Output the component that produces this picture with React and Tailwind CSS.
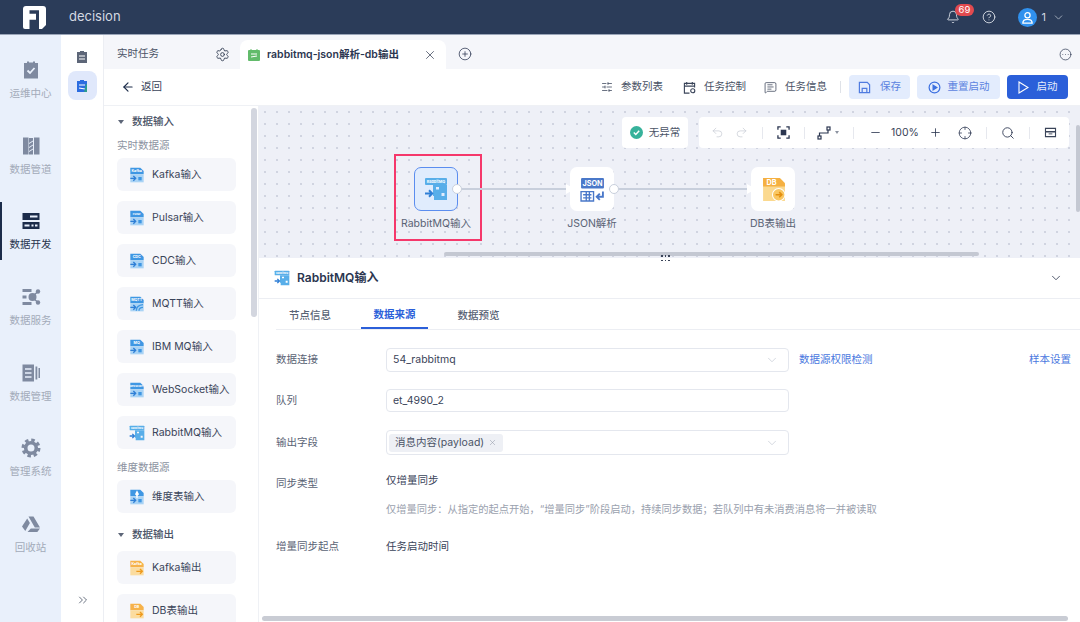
import {
  ArrowLeft,
  ChevronDown,
  ChevronsRight,
  CircleEllipsis,
  CirclePlus,
  Crosshair,
  HelpCircle,
  Minus,
  Plus,
  Redo2,
  Search,
  Settings,
  SlidersHorizontal,
  Undo2,
  X,
  Bell,
  MessageSquareText,
} from "lucide-react";

const FONT = { fontFamily: "Inter, 'Noto Sans CJK SC', sans-serif" };

// rail icons
const RailIcon = ({ kind, color }) => {
  const common = { width: 20, height: 20, viewBox: "0 0 20 20", fill: color };
  if (kind === "ops")
    return (
      <svg {...common}>
        <path d="M3 3h3V1.500h2v1h4v-1h2V3h3v15.500H3z" />
        <path d="M6.500 10.500l2.500 2.500 4.500-5" fill="none" stroke="#e9f0fb" strokeWidth="1.800" />
      </svg>
    );
  if (kind === "pipe")
    return (
      <svg {...common}>
        <path d="M2 1.500h5.500v17H2zM13 1.500h5.500v17H13z" />
        <path d="M8 2h4v2.500L8 7zM8 8l4-2.500v3L8 11zM8 12l4-2.500v3L8 15zM8 16l4-2.500v5H8z" />
      </svg>
    );
  if (kind === "dev")
    return (
      <svg {...common}>
        <path d="M1.500 2h17v7h-17zM1.500 11h17v7h-17z" />
        <path d="M9 4.500h7.500v2H9zM3.500 13.500h5v2h-5zM14 13.500h2.500v2H14zM10.500 13.500h2v2h-2z" fill="#e9f0fb" />
      </svg>
    );
  if (kind === "svc")
    return (
      <svg {...common}>
        <path d="M1.500 2h9v3h-9zM1.500 15h9v3h-9zM1.500 8.500h4v3h-4z" />
        <circle cx="11.500" cy="10" r="4" />
        <circle cx="17" cy="4.500" r="2.200" />
        <circle cx="17" cy="15.500" r="2.200" />
        <path d="M12 9l5-4.500M12 11l5 4.500" stroke={color} strokeWidth="1.500" />
      </svg>
    );
  if (kind === "mgr")
    return (
      <svg {...common}>
        <path d="M1.500 1.500h11.500v17H1.500z" />
        <path d="M4 6h6.500M4 10h6.500M4 14h6.500" stroke="#e9f0fb" strokeWidth="1.500" />
        <path d="M14.500 3.500h1.800v13h-1.800zM17.500 5h1.500v10h-1.500z" />
      </svg>
    );
  if (kind === "sys")
    return (
      <svg width="20" height="20" viewBox="0 0 20 20" fill="none" stroke={color}>
        <circle cx="10" cy="10" r="5.300" strokeWidth="3.600" />
        <circle cx="10" cy="10" r="8" strokeWidth="3" strokeDasharray="3.500 2.780" />
      </svg>
    );
  return (
    <svg {...common}>
      <path d="M7.500 2.500h5l6.500 11h-5.200zM6.200 4.500l2.700 4.600-4.600 8L1 12.500zM9.800 14.500H19l-2.700 3.500H6.500z" />
    </svg>
  );
};

const RailItem = ({ kind, label, active }) => (
  <div className="relative flex h-[75.6px] flex-col items-center justify-center gap-[7px]">
    {active && <div className="absolute top-[8px] left-0 h-[58px] w-[2px] bg-[#1c2c4a]" />}
    <RailIcon kind={kind} color={active ? "#1c2c4a" : "#7f8aa0"} />
    <span className={`text-[10.5px] leading-[14px] ${active ? "text-[#27344c]" : "text-[#a3abb9]"}`}>{label}</span>
  </div>
);

// node icon, tag on top, body under it and an arrow
const NodeGlyph = ({ tag, size = 16, orange, shape }) => {
  const main = orange ? "#f6b24a" : "#3f97e3";
  const light = orange ? "#fbdc9f" : "#a9d3f5";
  const arrow = orange ? "#ee9a1d" : "#2f7fd6";
  const tagSize = tag.length > 5 ? 3.800 : 5.500;
  if (shape === "rabbit") {
    return (
      <svg width={size} height={size} viewBox="0 0 24 24" className="shrink-0">
        <rect x="1" y="1" width="22" height="7" rx="1" fill="#58aee9" />
        <text x="12" y="6" textAnchor="middle" fontSize="3.800" fontWeight="700" fill="#fff" style={FONT}>
          {tag}
        </text>
        <path
          fillRule="evenodd"
          d="M9 8h14v15H10v-4H9zM12 10v2.500h3V10zM17.500 16v3h3v-3z"
          fill="#58aee9"
        />
        <path d="M1 16.500h7m-3-3.200l3.200 3.200-3.200 3.200" fill="none" stroke={arrow} strokeWidth="2" />
      </svg>
    );
  }
  return (
    <svg width={size} height={size} viewBox="0 0 24 24" className="shrink-0">
      <path d="M2 1h15l5 5v5H2z" fill={main} />
      <path d="M2 11h20v12H2z" fill={light} />
      {shape === "mqtt" && (
        <path d="M11 22q0-8 10-9M15 22q0-5 6-5" fill="none" stroke={main} strokeWidth="2" />
      )}
      {shape === "dim" && <path d="M12 2l3 6-2 2v4h-2v-4L9 8z" fill="#fff" />}
      {!orange && shape !== "mqtt" && <rect x="14" y="15" width="5" height="5" fill={main} />}
      <text x="11.500" y="8" textAnchor="middle" fontSize={tagSize} fontWeight="700" fill="#fff" style={FONT}>
        {tag}
      </text>
      {orange ? (
        <path d="M11 17h9m-3.500-3.500L20 17l-3.500 3.500" fill="none" stroke={arrow} strokeWidth="2" />
      ) : (
        <path d="M2 17h8m-3.500-3.500L10 17l-3.500 3.500" fill="none" stroke={arrow} strokeWidth="2" />
      )}
    </svg>
  );
};

const PaletteItem = ({ tag, label, orange, shape, className = "" }) => (
  <div className={`flex h-[33px] w-[119px] items-center rounded-[6px] bg-[#f5f6fa] pl-[12px] ${className}`}>
    <NodeGlyph tag={tag} orange={orange} shape={shape} />
    <span className="ml-[7px] text-[10.5px] whitespace-nowrap text-[#3a4459]">{label}</span>
  </div>
);

const GroupTitle = ({ label, className = "" }) => (
  <div className={`flex items-center ${className}`}>
    <span className="ml-[14px] h-0 w-0 border-x-[3px] border-t-[4px] border-x-transparent border-t-[#5d6678]" />
    <span className="ml-[8px] text-[10.5px] font-medium text-[#4a5366]">{label}</span>
  </div>
);

const ToolAction = ({ icon, label }) => (
  <div className="flex items-center gap-[8px] text-[10.5px] text-[#4a5366]">
    {icon}
    <span>{label}</span>
  </div>
);

const Sep = () => <div className="h-[12px] w-px bg-[#e6e8ee]" />;

const CanvasNode = ({ x, selected, children }) => (
  <div
    className={`absolute top-[61px] flex h-[44px] w-[44px] items-center justify-center rounded-[7px] ${
      selected ? "border border-[#5b8def] bg-[#e0ecfd]" : "bg-white"
    }`}
    style={{ left: x }}
  >
    {children}
  </div>
);

const Port = ({ x }) => (
  <div className="absolute top-[78px] h-[10px] w-[10px] rounded-full border border-[#c8cfdc] bg-white" style={{ left: x }} />
);

const Edge = ({ x, w }) => (
  <div className="absolute top-[82px] h-[2px] bg-[#c8cfdc]" style={{ left: x, width: w }}>
    <span className="absolute top-[-4px] right-[-9px] h-0 w-0 border-y-[5px] border-l-[9px] border-y-transparent border-l-white" />
  </div>
);

const NodeLabel = ({ x, children }) => (
  <div className="absolute top-[110px] w-[100px] text-center text-[10.5px] text-[#5a6375]" style={{ left: x }}>
    {children}
  </div>
);

const FormRow = ({ label, children, className = "" }) => (
  <div className={`flex items-center ${className}`}>
    <span className="w-[110px] shrink-0 text-[10.5px] text-[#5a6375]">{label}</span>
    {children}
  </div>
);

const FieldBox = ({ children, arrow, h = "h-[24px]" }) => (
  <div className={`flex w-[403px] items-center justify-between rounded-[4px] border border-[#e4e7ee] bg-white pr-[9px] text-[10.5px] text-[#3a4459] ${h}`}>
    {children}
    {arrow && <ChevronDown size={14} color="#c3c8d2" strokeWidth={1.200} />}
  </div>
);

const App = () => {
  return (
    <div className="flex h-[622px] w-[1080px] flex-col overflow-hidden bg-white" style={FONT}>
      {/* top bar */}
      <header className="flex h-[35px] shrink-0 items-center border-b border-[#9aa5b8] bg-[#2b3c59]">
        <svg width="23" height="23" viewBox="0 0 23 23" className="ml-[23px]">
          <path d="M3 0h17q3 0 3 3v16l-4 4H2q-2 0-2-2V3q0-3 3-3z" fill="#fff" />
          <path d="M6.500 4.300H16V23H6.500v-9.300H13V7.700H6.500z" fill="#2b3c59" />
        </svg>
        <span className="ml-[23px] text-[13px] text-[#d4d9e2]">decision</span>
        <div className="relative ml-auto flex items-center">
          <Bell size={14} color="#dfe3ea" strokeWidth={1.500} />
          <span className="absolute top-[-4px] left-[9px] rounded-full bg-[#e24a4f] px-[4px] text-[9.500px] leading-[12px] text-white">69</span>
          <HelpCircle size={14} color="#dfe3ea" strokeWidth={1.500} className="ml-[22px]" />
          <div className="ml-[22px] flex h-[19px] w-[19px] items-center justify-center rounded-full bg-[#3091ee]">
            <svg width="13" height="13" viewBox="0 0 14 14" fill="none" stroke="#fff" strokeWidth="1.400">
              <circle cx="7" cy="4.500" r="2.800" />
              <path d="M2 13q0-4 5-4t5 4z" />
            </svg>
          </div>
          <span className="ml-[5px] text-[11px] text-[#d4d9e2]">1</span>
          <ChevronDown size={13} color="#c0c7d3" strokeWidth={1.400} className="mr-[15px] ml-[6px]" />
        </div>
      </header>

      <div className="flex min-h-0 flex-1">
        {/* main rail */}
        <nav className="w-[61px] shrink-0 bg-[#e9f0fb] pt-[8px]">
          <RailItem kind="ops" label="运维中心" />
          <RailItem kind="pipe" label="数据管道" />
          <RailItem kind="dev" label="数据开发" active />
          <RailItem kind="svc" label="数据服务" />
          <RailItem kind="mgr" label="数据管理" />
          <RailItem kind="sys" label="管理系统" />
          <RailItem kind="bin" label="回收站" />
        </nav>

        {/* sub rail */}
        <div className="flex w-[43px] shrink-0 flex-col items-center border-r border-[#eceef3] bg-white pt-[15px]">
          <svg width="14" height="14" viewBox="0 0 14 14">
            <path d="M2 2h3V1h4v1h3v11H2z" fill="#5d6678" />
            <path d="M4 6h6M4 9h6" stroke="#fff" strokeWidth="1.200" />
          </svg>
          <div className="mt-[7px] flex h-[29px] w-[29px] items-center justify-center rounded-[8px] bg-[#e0e8fb]">
            <svg width="14" height="14" viewBox="0 0 14 14">
              <path d="M2 2h3V1h4v1h3v11H2z" fill="#2b6ce0" />
              <path d="M4 6h6M4 9l6 1" stroke="#fff" strokeWidth="1.200" />
              <path d="M11 5h1v8h-3z" fill="#2a9d8f" />
            </svg>
          </div>
          <ChevronsRight size={14} color="#4a5366" strokeWidth={1.400} className="mt-auto mb-[15px] ml-[1px]" />
        </div>

        <main className="flex min-w-0 flex-1 flex-col">
          {/* tabs */}
          <div className="flex h-[34px] shrink-0 items-end bg-[#f5f6fa]">
            <div className="flex h-[34px] w-[136px] items-center pt-[4px] pl-[13px]">
              <span className="text-[10.5px] text-[#4a5366]">实时任务</span>
              <Settings size={15} color="#3a4459" strokeWidth={1.500} className="mr-[10px] ml-auto" />
            </div>
            <div className="flex h-[29px] w-[206px] items-center rounded-t-[8px] bg-white pl-[8px]">
              <svg width="12" height="12" viewBox="0 0 12 12">
                <rect y="1" width="12" height="11" rx="1" fill="#62bb6b" />
                <path d="M2.500 0h1v2h-1zM8.500 0h1v2h-1z" fill="#62bb6b" />
                <path d="M3 5h6M3 8l6-1" stroke="#fff" strokeWidth="1" />
              </svg>
              <span className="ml-[7px] text-[10.5px] font-semibold whitespace-nowrap text-[#2b3650]">rabbitmq-json解析-db输出</span>
              <X size={14} color="#3a4459" strokeWidth={1.300} className="mr-[9px] ml-auto" />
            </div>
            <CirclePlus size={14} color="#2b3650" strokeWidth={1.300} className="mb-[8px] ml-[12px]" />
            <CircleEllipsis size={13} color="#2b3650" strokeWidth={1.300} className="mr-[8px] mb-[8px] ml-auto" />
          </div>

          {/* toolbar */}
          <div className="flex h-[37px] shrink-0 items-center border-b border-[#eff1f5] bg-white">
            <ArrowLeft size={14} color="#1c2c4a" strokeWidth={2} className="ml-[17px]" />
            <span className="ml-[6px] text-[10.5px] text-[#3a4459]">返回</span>
            <div className="ml-auto flex items-center">
              <ToolAction icon={<SlidersHorizontal size={12} color="#3a4459" strokeWidth={1.500} />} label="参数列表" />
              <div className="w-[20px]" />
              <ToolAction
                icon={
                  <svg width="13" height="13" viewBox="0 0 14 14" fill="none" stroke="#3a4459" strokeWidth="1.200">
                    <path d="M7 13H1.500V2.500h11V7M1.500 5.500h11M4 1v3M10 1v3" />
                    <circle cx="10.500" cy="10.500" r="2.200" />
                  </svg>
                }
                label="任务控制"
              />
              <div className="w-[18px]" />
              <ToolAction icon={<MessageSquareText size={13} color="#3a4459" strokeWidth={1.400} />} label="任务信息" />
              <div className="mr-[8px] ml-[13px] h-[12px] w-px bg-[#dfe2e8]" />
              <button className="flex h-[24px] w-[61px] items-center justify-center gap-[9px] rounded-[4px] bg-[#e3ecfd] text-[10.5px] text-[#5b83e0]">
                <svg width="13" height="13" viewBox="0 0 14 14" fill="none" stroke="#4f7be0" strokeWidth="1.300">
                  <path d="M1.500 1.500h8.500l2.500 2.500v8.500h-11zM4.500 12.500V8h5v4.500" />
                </svg>
                保存
              </button>
              <button className="ml-[7px] flex h-[24px] w-[83px] items-center justify-center gap-[7px] rounded-[4px] bg-[#e3ecfd] text-[10.5px] text-[#5b83e0]">
                <svg width="13" height="13" viewBox="0 0 14 14" fill="none" stroke="#3b6fe0" strokeWidth="1.300">
                  <circle cx="7" cy="7" r="5.800" />
                  <path d="M5.500 4.500l4 2.500-4 2.500z" fill="#3b6fe0" />
                </svg>
                重置启动
              </button>
              <button className="mr-[12px] ml-[7px] flex h-[24px] w-[61px] items-center justify-center gap-[8px] rounded-[4px] bg-[#2b5fd9] text-[10.5px] text-[#e6edfb]">
                <svg width="11" height="13" viewBox="0 0 11 13" fill="none" stroke="#fff" strokeWidth="1.100">
                  <path d="M1 1l9 5.500-9 5.500z" />
                </svg>
                启动
              </button>
            </div>
          </div>

          <div className="flex min-h-0 flex-1">
            {/* palette */}
            <aside className="relative w-[155px] shrink-0 overflow-hidden border-r border-[#eff1f5] bg-white pl-[13px]">
              <div className="absolute top-[2px] right-[1px] h-[209px] w-[6px] rounded-full bg-[#d3d6df]" />
              <GroupTitle label="数据输入" className="-ml-[13px] h-[33px] pb-[1px]" />
              <div className="mb-[5px] text-[10.5px] leading-[14px] text-[#8c93a1]">实时数据源</div>
              <div className="flex flex-col gap-[10px]">
                <PaletteItem tag="Kafka" label="Kafka输入" />
                <PaletteItem tag="Pulsar" label="Pulsar输入" />
                <PaletteItem tag="CDC" label="CDC输入" />
                <PaletteItem tag="MQTT" label="MQTT输入" shape="mqtt" />
                <PaletteItem tag="MQ" label="IBM MQ输入" />
                <PaletteItem tag="WebSocket" label="WebSocket输入" />
                <PaletteItem tag="RabbitMQ" label="RabbitMQ输入" shape="rabbit" />
              </div>
              <div className="mt-[12px] mb-[5px] text-[10.5px] leading-[14px] text-[#8c93a1]">维度数据源</div>
              <PaletteItem tag="" label="维度表输入" shape="dim" />
              <GroupTitle label="数据输出" className="-ml-[13px] h-[38px] pt-[5px]" />
              <div className="flex flex-col gap-[10px]">
                <PaletteItem tag="Kafka" label="Kafka输出" orange />
                <PaletteItem tag="DB" label="DB表输出" orange />
              </div>
            </aside>

            <section className="flex min-w-0 flex-1 flex-col">
              {/* canvas */}
              <div className="relative z-10 h-[152px] shrink-0 bg-[#eef0f7] bg-[radial-gradient(#ced2df_0.7px,transparent_0.8px)] bg-[size:12px_12px]">
                <div className="absolute top-[11px] left-[363px] flex h-[31px] w-[66px] items-center justify-center gap-[6px] rounded-[4px] bg-white text-[10.5px] text-[#4a5366]">
                  <span className="flex h-[13px] w-[13px] items-center justify-center rounded-full bg-[#37b29b]">
                    <svg width="9" height="9" viewBox="0 0 10 10" fill="none" stroke="#fff" strokeWidth="1.600">
                      <path d="M2 5l2.200 2.200L8 3" />
                    </svg>
                  </span>
                  无异常
                </div>
                <div className="absolute top-[11px] left-[440px] flex h-[31px] w-[370px] items-center rounded-[4px] bg-white pl-[12px] text-[#3a4459]">
                  <Undo2 size={13} color="#c6cad3" strokeWidth={1.300} />
                  <Redo2 size={13} color="#c6cad3" strokeWidth={1.300} className="ml-[11px]" />
                  <div className="ml-[14px]"><Sep /></div>
                  <svg width="13" height="13" viewBox="0 0 14 14" fill="none" stroke="#2b3650" strokeWidth="1.400" className="ml-[14px]">
                    <path d="M1 4V1h3M10 1h3v3M13 10v3h-3M4 13H1v-3" />
                    <rect x="4" y="4" width="6" height="6" fill="#2b3650" stroke="none" />
                  </svg>
                  <div className="ml-[14px]"><Sep /></div>
                  <svg width="14" height="14" viewBox="0 0 14 14" fill="none" stroke="#2b3650" strokeWidth="1.200" className="ml-[12px]">
                    <rect x="1" y="10" width="3" height="3" />
                    <rect x="10" y="1" width="3" height="3" />
                    <path d="M2.500 10V7h8.500V4" />
                  </svg>
                  <span className="ml-[4px] h-0 w-0 border-x-[2.500px] border-t-[3px] border-x-transparent border-t-[#8c93a1]" />
                  <div className="ml-[14px]"><Sep /></div>
                  <Minus size={13} color="#2b3650" strokeWidth={1.500} className="ml-[15px]" />
                  <span className="ml-[9px] text-[10.5px] text-[#3a4459]">100%</span>
                  <Plus size={13} color="#2b3650" strokeWidth={1.500} className="ml-[10px]" />
                  <Crosshair size={14} color="#2b3650" strokeWidth={1.300} className="ml-[16px]" />
                  <div className="ml-[14px]"><Sep /></div>
                  <Search size={14} color="#2b3650" strokeWidth={1.500} className="ml-[14px]" />
                  <div className="ml-[14px]"><Sep /></div>
                  <svg width="13" height="13" viewBox="0 0 14 14" fill="#3a4459" className="ml-[14px]">
                    <path fillRule="evenodd" d="M1 2h12v10H1zM2.200 3.200v2.300h9.600V3.200zM2.200 7v3.800h9.600V7z" />
                    <rect x="5" y="8" width="4" height="1" />
                  </svg>
                </div>

                <div className="absolute top-[48px] left-[135px] h-[87px] w-[88px] border-2 border-[#f5386b]" />
                <Edge x={203} w={104} />
                <Edge x={360} w={128} />
                <CanvasNode x={155} selected>
                  <NodeGlyph tag="RabbitMQ" size={24} shape="rabbit" />
                </CanvasNode>
                <CanvasNode x={311}>
                  <svg width="25" height="25" viewBox="0 0 24 24">
                    <rect x="1" y="1" width="22" height="10" rx="1" fill="#4a78c9" />
                    <text x="12" y="8.500" textAnchor="middle" fontSize="7" fontWeight="700" fill="#fff" style={FONT}>JSON</text>
                    <path d="M1 14h12v9H1zM3 17h8M3 20h8M6 14v9M9 14v9" fill="none" stroke="#4a78c9" strokeWidth="1.300" />
                    <path d="M22 14v5h-6m3-3l-3 3 3 3" fill="none" stroke="#4a78c9" strokeWidth="1.800" />
                  </svg>
                </CanvasNode>
                <CanvasNode x={492}>
                  <svg width="25" height="25" viewBox="0 0 24 24">
                    <path d="M2 1h16l5 5v17H2z" fill="#fbd98f" />
                    <path d="M2 1h16l5 5v3H2z" fill="#f5b041" />
                    <text x="10" y="8" textAnchor="middle" fontSize="7" fontWeight="700" fill="#fff" style={FONT}>DB</text>
                    <circle cx="17" cy="17" r="6" fill="#f9c762" stroke="#fff" />
                    <path d="M14 17h6m-2.500-2.500L20 17l-2.500 2.500" fill="none" stroke="#e48f0f" strokeWidth="1.500" />
                  </svg>
                </CanvasNode>
                <Port x={193} />
                <Port x={350} />
                <NodeLabel x={127}>RabbitMQ输入</NodeLabel>
                <NodeLabel x={283}>JSON解析</NodeLabel>
                <NodeLabel x={464}>DB表输出</NodeLabel>

                <div className="absolute top-[146px] left-[185px] h-[4px] w-[535px] rounded-full bg-[#c4c8d2]" />
                <div className="absolute top-[19px] right-0 h-[87px] w-[4px] rounded-full bg-[#c4c8d2]" />
                <div className="absolute top-[149px] left-[402px] grid grid-cols-3 gap-x-[2px] gap-y-[3px]">
                  {[0, 1, 2, 3, 4, 5].map((i) => (
                    <span key={i} className="h-[1.500px] w-[1.500px] bg-[#3a4459]" />
                  ))}
                </div>
              </div>

              {/* detail panel */}
              <div className="relative min-h-0 flex-1 bg-white">
                <div className="flex h-[41px] items-center border-b border-[#eceef3] pl-[15px]">
                  <NodeGlyph tag="RabbitMQ" size={16} shape="rabbit" />
                  <span className="ml-[7px] text-[12px] font-semibold text-[#2b3650]">RabbitMQ输入</span>
                  <ChevronDown size={14} color="#3a4459" strokeWidth={1.500} className="mr-[17px] ml-auto" />
                </div>
                <div className="ml-[17px] flex h-[31px] border-b border-[#eceef3] text-[10.5px] font-medium">
                  <div className="flex w-[68px] items-center justify-center pt-[3px] text-[#5a6375]">节点信息</div>
                  <div className="ml-[17px] flex w-[67px] items-center justify-center border-b-2 border-[#2b5fd9] pt-[3px] font-semibold text-[#2b5fd9]">数据来源</div>
                  <div className="ml-[17px] flex w-[67px] items-center justify-center pt-[3px] text-[#5a6375]">数据预览</div>
                </div>
                <div className="pt-[18px] pl-[17px]">
                  <FormRow label="数据连接">
                    <FieldBox arrow>
                      <span className="pl-[6px]">54_rabbitmq</span>
                    </FieldBox>
                    <span className="ml-[10px] text-[10.5px] text-[#4a78e0]">数据源权限检测</span>
                    <span className="mr-[9px] ml-auto text-[10.5px] text-[#4a78e0]">样本设置</span>
                  </FormRow>
                  <FormRow label="队列" className="mt-[17px]">
                    <FieldBox h="h-[23px]">
                      <span className="pl-[6px]">et_4990_2</span>
                    </FieldBox>
                  </FormRow>
                  <FormRow label="输出字段" className="mt-[18px]">
                    <FieldBox arrow h="h-[25px]">
                      <span className="ml-[2px] flex h-[18px] items-center gap-[4px] rounded-[3px] bg-[#eef0f5] px-[6px] text-[10.5px] text-[#4a5366]">
                        消息内容(payload)
                        <X size={9} color="#8c93a1" strokeWidth={1.300} />
                      </span>
                    </FieldBox>
                  </FormRow>
                  <FormRow label="同步类型" className="mt-[21px] items-start">
                    <div className="text-[10.5px] text-[#3a4459]">
                      <div className="-mt-[3px]">仅增量同步</div>
                      <div className="mt-[13px] text-[10.25px] whitespace-nowrap text-[#9aa1ae]">
                        仅增量同步：从指定的起点开始，“增量同步”阶段启动，持续同步数据；若队列中有未消费消息将一并被读取
                      </div>
                    </div>
                  </FormRow>
                  <FormRow label="增量同步起点" className="mt-[22px]">
                    <span className="text-[10.5px] text-[#3a4459]">任务启动时间</span>
                  </FormRow>
                </div>
                <div className="absolute bottom-[1px] left-[3px] h-[5px] w-[806px] rounded-full bg-[#c9ccd4]" />
              </div>
            </section>
          </div>
        </main>
      </div>
    </div>
  );
};

export default App;
